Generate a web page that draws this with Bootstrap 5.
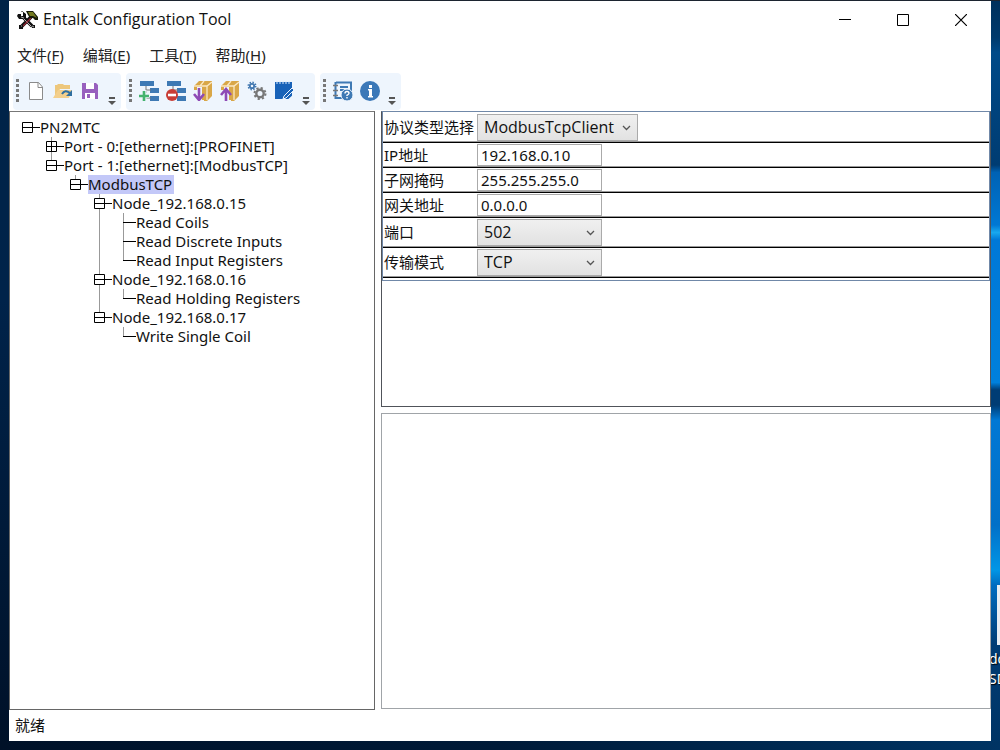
<!DOCTYPE html>
<html lang="zh-CN">
<head>
<meta charset="utf-8">
<meta name="viewport" content="width=device-width, initial-scale=1">
<title>Entalk Configuration Tool</title>
<link href="https://cdn.jsdelivr.net/npm/bootstrap@5.3.0/dist/css/bootstrap.min.css" rel="stylesheet">
<style>
  body { font-family: "Noto Sans", "Noto Sans CJK SC", sans-serif; font-size: 15px; line-height: 19px; color: #111; }
  .desktop {
    padding: 1px 9px 9px;
    background:
      linear-gradient(90deg, #001128, #001a38 50%, #003464) bottom / 100% 9px no-repeat,
      linear-gradient(#002347, #00234a 40%, #001128) left / 9px 100% no-repeat,
      linear-gradient(#1c2430, #1c2430) top / 100% 1px no-repeat,
      linear-gradient(#00305c, #003a6c 5%, #004a88 7%, #003c72 22%, #0062b4 23%, #0078d4 30%, #18a8ee 31%, #0078d7 32%, #0080dc 51%, #003c74 52%, #003c74 54%, #0078d4 56%, #0070c8 70%, #0096e6 76%, #006cc0 78%, #003c74 86%, #003464) right / 9px 100% no-repeat;
  }
  .shortcut { position: absolute; right: -59px; top: 585px; width: 70px; color: #fff; text-shadow: 1px 1px 1px #000; font-size: 14px; line-height: 20px; }
  .shortcut svg { display: block; margin: 0 0 4px 8px; }
  .app-window { position: relative; background: #fff; }
  .titlebar { height: 38px; padding: 0 1px 0 8px; }
  .app-name { font-family: "Open Sans", sans-serif; font-size: 16px; font-weight: 400; margin-left: 5px; }
  .caption-btn { width: 58px; height: 36px; padding: 0; border: 0; background: none; }
  .caption-btn svg { display: block; margin: auto; }
  .menu-strip { height: 34px; padding: 0 0 2px 8px; gap: 19px; }
  .menu-strip a { color: #222; text-decoration: none; }
  .menu-strip u { text-underline-offset: 2px; text-decoration-thickness: 1px; }
  .tool-tray { height: 38px; padding: 0 4px 1px; gap: 5px; }
  .tool-group { background: #eef5fd; border-radius: 4px; padding: 0 0 2px 3px; }
  .grip { width: 3px; height: 23px; margin: 6px 3px 0 0; background: repeating-linear-gradient(#777 0 3px, transparent 3px 5px); }
  .tool-btn { width: 27px; padding: 0; border: 0; background: none; }
  .tool-btn svg { display: block; margin: auto; }
  .more-btn { width: 18px; padding: 0 0 2px; border: 0; background: none; display: flex; align-items: flex-end; justify-content: center; }
  .workspace { display: grid; grid-template-columns: 3fr 5fr; gap: 6px; min-height: 0; }
  .tree-pane { border: 1px solid #666; border-top-color: #777; padding: 6px 0 0 12px; overflow: auto; }
  .side-panes { display: grid; grid-template-rows: 1fr 1fr; gap: 6px; min-height: 0; padding-bottom: 1px; }
  .props-pane { border: 1px solid #50545a; border-top-color: #7088a8; min-height: 0; }
  .output-pane { border: 1px solid #a0a4a8; }
  .tree, .tree ul { list-style: none; margin: 0; padding: 0; }
  .tree ul { padding-left: 24px; }
  .tree ul > li { background: linear-gradient(#999, #999) 5px 0 / 1px 100% no-repeat; }
  .tree ul > li:last-child { background-size: 1px 10px; }
  .tree-line { display: flex; align-items: center; height: 19px; white-space: nowrap; }
  .tree-line button { border: 0; padding: 0; background: none; width: 18px; height: 19px; flex: none; }
  .tree-line svg { display: block; flex: none; }
  .picked { background: #c3c8f8; padding-right: 2px; }
  .prop-list { border: 1px solid #7088a8; border-top: 0; padding-bottom: 2px; }
  .prop-row { display: flex; align-items: center; border-bottom: 1px solid #000; box-shadow: inset 0 -1px #999; padding: 1px 0 1px 1px; }
  .prop-row:first-child { padding-top: 2px; }
  .prop-row label { width: 93px; flex: none; white-space: nowrap; }
  .prop-row input { width: 125px; height: 22px; padding: 0 3px; border: 1px solid #aaa; background: #fff; color: #111; }
  .prop-row select { appearance: none; width: 125px; height: 27px; padding: 0 6px; border: 1px solid #aaa; color: #111; border-radius: 0; font-family: "Open Sans", sans-serif; font-size: 16px;
    background: url("data:image/svg+xml,%3Csvg xmlns='http://www.w3.org/2000/svg' width='9' height='6'%3E%3Cpath d='M1 1l3.500 3.500L8 1' fill='none' stroke='%23555' stroke-width='1.300'/%3E%3C/svg%3E") right 6px center no-repeat, linear-gradient(#f0f0f0, #e2e2e2); }
  .prop-row select.wide { width: 161px; }
  .status-strip { height: 31px; padding-left: 6px; }
</style>
</head>
<body>
<svg class="d-none" xmlns="http://www.w3.org/2000/svg">
  <symbol id="minus" viewBox="0 0 18 19"><path d="M.5 4.500h10v10H.5zM0 9.500h18" fill="#fff" stroke="#000"/></symbol>
  <symbol id="plus" viewBox="0 0 18 19"><path d="M.5 4.500h10v10H.5zM0 9.500h18M5.500 4v11" fill="#fff" stroke="#000"/></symbol>
  <symbol id="leaf" viewBox="0 0 18 19"><path d="M5 9.500h13" stroke="#000"/></symbol>
  <symbol id="more" viewBox="0 0 8 9"><path d="M1 0h6v2H1zM0 4h8L4 8z" fill="#555"/></symbol>
  <symbol id="box" viewBox="0 0 20 20"><path d="M1 5L6 0h13v15l-5 5H6V6H1z" fill="#d9a748"/><path d="M1 5h13l5-4M14 5v14M7 5l4-5" stroke="#fbe9c4" stroke-width="1.300" fill="none"/><path d="M0 6h11v14H0z" fill="#eef5fd"/><path d="M1 6h3v3H1zM9 6h3v13H9z" fill="#d9a748"/></symbol>
</svg>
<div class="desktop vh-100 d-flex flex-column position-relative overflow-hidden">
  <div class="shortcut" aria-hidden="true">
    <svg width="50" height="60"><path d="M0 0h50v60H0z" fill="#e8edf2"/></svg>
    <div>do</div><div>SD</div>
  </div>
  <div class="app-window d-flex flex-column flex-grow-1">
    <header class="titlebar d-flex align-items-center">
      <svg width="21" height="20" viewBox="0 0 21 20" aria-hidden="true">
        <path d="M6 7l9 9M14 7L4 17" stroke="#111" stroke-width="3.600"/>
        <path d="M6 8l8 8" stroke="#b9aeb4" stroke-width="1"/><path d="M14 8L6 16" stroke="#8f2430" stroke-width="1.200"/>
        <path d="M1 4h3v2h2V2H4l1-1 4 3v4L6 9H2L0 6z" fill="#111"/><path d="M4 7l3 1" stroke="#aaa"/>
        <path d="M9 1h7l5 6v3h-3l-2-2h-3L11 5z" fill="#161a08"/><path d="M11 2h5l4 6-4-2-3 0z" fill="#747a20"/>
        <path d="M2 15h4v4H2zM14 15h4v3h-3z" fill="#111"/><path d="M4 16h1M15 16l2 1" stroke="#aaa"/>
      </svg>
      <h1 class="app-name mb-0 me-auto">Entalk Configuration Tool</h1>
      <button class="caption-btn" aria-label="最小化"><svg width="12" height="12"><path d="M0 5.500h12" stroke="#000"/></svg></button>
      <button class="caption-btn" aria-label="最大化"><svg width="12" height="12"><path d="M.5.5h11v11H.5z" fill="none" stroke="#000"/></svg></button>
      <button class="caption-btn" aria-label="关闭"><svg width="12" height="12"><path d="M0 0l12 12M12 0L0 12" stroke="#000" stroke-width="1.200"/></svg></button>
    </header>
    <nav class="menu-strip d-flex align-items-center">
      <a href="#">文件(<u>F</u>)</a><a href="#">编辑(<u>E</u>)</a><a href="#">工具(<u>T</u>)</a><a href="#">帮助(<u>H</u>)</a>
    </nav>
    <div class="tool-tray d-flex" role="toolbar">
      <div class="tool-group d-flex">
        <span class="grip"></span>
        <button class="tool-btn" aria-label="新建"><svg width="20" height="20" viewBox="0 0 20 20"><path d="M3.500 1.500h9l4 4.500v12.500h-13z" fill="#fff" stroke="#8b8b8b"/><path d="M12 1.500V6.500h4.500" fill="none" stroke="#8b8b8b"/></svg></button>
        <button class="tool-btn" aria-label="打开"><svg width="20" height="20" viewBox="0 0 20 20"><path d="M2 16V4h2l1-1h5l1 1h6v4H7z" fill="#edc77c"/><path d="M0 17l5-8h14l-3 8z" fill="#f3cf8c"/><path d="M9 13q3-5 8-1" fill="none" stroke="#2f6f9f" stroke-width="2"/><path d="M19 9v6h-6z" fill="#2f6f9f"/></svg></button>
        <button class="tool-btn" aria-label="保存"><svg width="20" height="20" viewBox="0 0 20 20"><path d="M2 2h14l2 2v14H2z" fill="#9860be"/><path d="M6 2h8v6H6zM5 12h10v6H5z" fill="#fff"/><path d="M7 13h3v4H7z" fill="#9860be"/></svg></button>
        <button class="more-btn" aria-label="更多"><svg width="8" height="9"><use href="#more"/></svg></button>
      </div>
      <div class="tool-group d-flex">
        <span class="grip"></span>
        <button class="tool-btn" aria-label="添加节点"><svg width="20" height="20" viewBox="0 0 20 20"><path d="M1 0h14v5H1zM11 7h9v5h-9zM11 15h9v5h-9z" fill="#3e79b4"/><path d="M7 5v12h5M7 9h5" fill="none" stroke="#777"/><path d="M5 9v11M0 14.500h10" stroke="#eef5fd" stroke-width="5"/><path d="M5 10v10M0 15h10" stroke="#45b36f" stroke-width="2.600"/></svg></button>
        <button class="tool-btn" aria-label="删除节点"><svg width="20" height="20" viewBox="0 0 20 20"><path d="M1 0h14v5H1zM11 7h9v5h-9zM11 15h9v5h-9z" fill="#3e79b4"/><path d="M7 5v4h5" fill="none" stroke="#777"/><circle cx="6" cy="14" r="6" fill="#c93d35"/><path d="M2 14h8" stroke="#fff" stroke-width="2.600"/></svg></button>
        <button class="tool-btn" aria-label="下载"><svg width="20" height="20"><use href="#box"/><path d="M6 7v11M1 13l5 6 5-6" fill="none" stroke="#8e4ab5" stroke-width="2.600"/></svg></button>
        <button class="tool-btn" aria-label="上传"><svg width="20" height="20"><use href="#box"/><path d="M6 20V9M1 14l5-6 5 6" fill="none" stroke="#8e4ab5" stroke-width="2.600"/></svg></button>
        <button class="tool-btn" aria-label="设置"><svg width="20" height="20" viewBox="0 0 20 20"><circle cx="5" cy="5" r="2.200" fill="none" stroke="#4278b0" stroke-width="1.800"/><circle cx="5" cy="5" r="3.700" fill="none" stroke="#4278b0" stroke-width="1.600" stroke-dasharray="1.453 1.453"/><circle cx="13" cy="12.500" r="3.700" fill="none" stroke="#777" stroke-width="2.400"/><circle cx="13" cy="12.500" r="5.500" fill="none" stroke="#777" stroke-width="2" stroke-dasharray="2.160 2.160"/></svg></button>
        <button class="tool-btn" aria-label="日志"><svg width="20" height="20" viewBox="0 0 20 20"><path d="M1 1h17v17H1z" fill="#1862b8"/><path d="M3 0v3M6 0v3M9 0v3M12 0v3M15 0v3" stroke="#dceafa"/><path d="M20 13v7h-8z" fill="#eef5fd"/><path d="M9 18l1-3 8-8 2 2-8 8z" fill="#1862b8" stroke="#eef5fd"/></svg></button>
        <button class="more-btn" aria-label="更多"><svg width="8" height="9"><use href="#more"/></svg></button>
      </div>
      <div class="tool-group d-flex">
        <span class="grip"></span>
        <button class="tool-btn" aria-label="帮助"><svg width="20" height="20" viewBox="0 0 20 20"><path d="M3 1.500h15v9M2.500 1v16H10" fill="none" stroke="#3e79b4" stroke-width="2"/><path d="M0 4.500h5M0 9.500h5M0 14.500h5" stroke="#777" stroke-width="1.500"/><path d="M7 6h8M7 9h4" stroke="#3e79b4" stroke-width="2"/><circle cx="14" cy="14" r="6" fill="#3e79b4" stroke="#eef5fd"/><path d="M12 12.500q0-2 2-2t2 1.800q0 1-2 2V15M14 16v1.500" fill="none" stroke="#fff" stroke-width="1.400"/></svg></button>
        <button class="tool-btn" aria-label="关于"><svg width="20" height="20" viewBox="0 0 20 20"><circle cx="10" cy="10" r="10" fill="#3b78b8"/><path d="M9 4h3v3H9zM8 8h4v7h1v1.500H8V15h1V9.500H8z" fill="#fff"/></svg></button>
        <button class="more-btn" aria-label="更多"><svg width="8" height="9"><use href="#more"/></svg></button>
      </div>
    </div>
    <main class="workspace flex-grow-1">
      <section class="tree-pane">
        <ul class="tree">
          <li><div class="tree-line"><button aria-label="折叠"><svg width="18" height="19"><use href="#minus"/></svg></button><span>PN2MTC</span></div>
            <ul>
              <li><div class="tree-line"><button aria-label="展开"><svg width="18" height="19"><use href="#plus"/></svg></button><span>Port - 0:[ethernet]:[PROFINET]</span></div></li>
              <li><div class="tree-line"><button aria-label="折叠"><svg width="18" height="19"><use href="#minus"/></svg></button><span>Port - 1:[ethernet]:[ModbusTCP]</span></div>
                <ul>
                  <li><div class="tree-line"><button aria-label="折叠"><svg width="18" height="19"><use href="#minus"/></svg></button><span class="picked">ModbusTCP</span></div>
                    <ul>
                      <li><div class="tree-line"><button aria-label="折叠"><svg width="18" height="19"><use href="#minus"/></svg></button><span>Node_192.168.0.15</span></div>
                        <ul>
                          <li><div class="tree-line"><svg width="18" height="19"><use href="#leaf"/></svg><span>Read Coils</span></div></li>
                          <li><div class="tree-line"><svg width="18" height="19"><use href="#leaf"/></svg><span>Read Discrete Inputs</span></div></li>
                          <li><div class="tree-line"><svg width="18" height="19"><use href="#leaf"/></svg><span>Read Input Registers</span></div></li>
                        </ul>
                      </li>
                      <li><div class="tree-line"><button aria-label="折叠"><svg width="18" height="19"><use href="#minus"/></svg></button><span>Node_192.168.0.16</span></div>
                        <ul>
                          <li><div class="tree-line"><svg width="18" height="19"><use href="#leaf"/></svg><span>Read Holding Registers</span></div></li>
                        </ul>
                      </li>
                      <li><div class="tree-line"><button aria-label="折叠"><svg width="18" height="19"><use href="#minus"/></svg></button><span>Node_192.168.0.17</span></div>
                        <ul>
                          <li><div class="tree-line"><svg width="18" height="19"><use href="#leaf"/></svg><span>Write Single Coil</span></div></li>
                        </ul>
                      </li>
                    </ul>
                  </li>
                </ul>
              </li>
            </ul>
          </li>
        </ul>
      </section>
      <div class="side-panes">
        <section class="props-pane">
          <form class="prop-list">
            <div class="prop-row"><label for="proto">协议类型选择</label><select id="proto" class="wide"><option>ModbusTcpClient</option></select></div>
            <div class="prop-row"><label for="ip">IP地址</label><input id="ip" type="text" value="192.168.0.10"></div>
            <div class="prop-row"><label for="mask">子网掩码</label><input id="mask" type="text" value="255.255.255.0"></div>
            <div class="prop-row"><label for="gate">网关地址</label><input id="gate" type="text" value="0.0.0.0"></div>
            <div class="prop-row"><label for="port">端口</label><select id="port"><option>502</option></select></div>
            <div class="prop-row"><label for="mode">传输模式</label><select id="mode"><option>TCP</option></select></div>
          </form>
        </section>
        <section class="output-pane"></section>
      </div>
    </main>
    <footer class="status-strip d-flex align-items-center">就绪</footer>
  </div>
</div>
<script src="https://cdn.jsdelivr.net/npm/bootstrap@5.3.0/dist/js/bootstrap.bundle.min.js"></script>
</body>
</html>
